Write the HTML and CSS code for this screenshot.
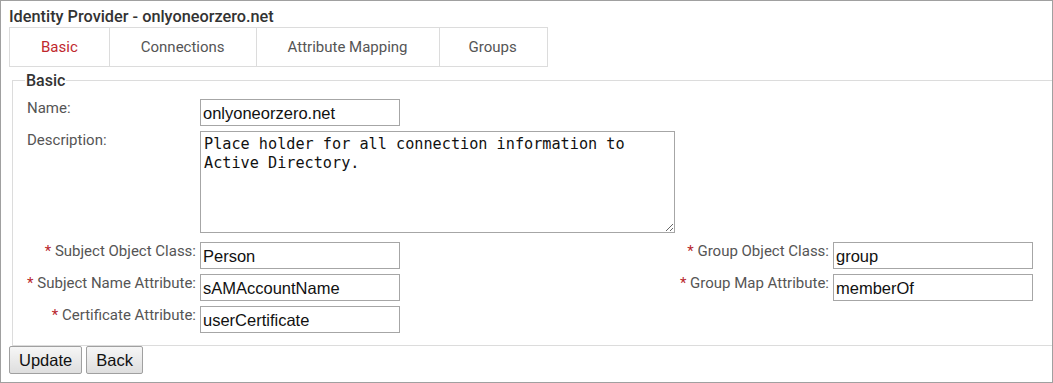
FILE: index.html
```html
<!DOCTYPE html>
<html lang="en">
<head>
    <meta charset="UTF-8">
    <title>Identity Provider - onlyoneorzero.net</title>
    <link rel="stylesheet" href="styles.css">
</head>
<body>
    <div class="panel">
        <!-- Page title -->
        <h1 class="title">Identity Provider - onlyoneorzero.net</h1>

        <!-- Tab strip -->
        <div class="tabs">
            <div class="tab active">Basic</div>
            <div class="tab">Connections</div>
            <div class="tab">Attribute Mapping</div>
            <div class="tab">Groups</div>
        </div>

        <!-- Basic settings -->
        <fieldset class="basic">
            <legend>Basic</legend>

            <div class="row">
                <label class="lbl">Name:</label>
                <input class="field" type="text" value="onlyoneorzero.net">
            </div>
            <div class="row">
                <label class="lbl">Description:</label>
                <textarea class="desc">Place holder for all connection information to Active Directory.</textarea>
            </div>

            <div class="pairs">
                <label class="lbl req"><span class="star">*</span> Subject Object Class:</label>
                <input class="field" type="text" value="Person">
                <span></span>
                <label class="lbl req"><span class="star">*</span> Group Object Class:</label>
                <input class="field" type="text" value="group">

                <label class="lbl req"><span class="star">*</span> Subject Name Attribute:</label>
                <input class="field" type="text" value="sAMAccountName">
                <span></span>
                <label class="lbl req"><span class="star">*</span> Group Map Attribute:</label>
                <input class="field" type="text" value="memberOf">

                <label class="lbl req"><span class="star">*</span> Certificate Attribute:</label>
                <input class="field" type="text" value="userCertificate">
            </div>
        </fieldset>

        <div class="actions">
            <button class="btn">Update</button>
            <button class="btn">Back</button>
        </div>
    </div>
</body>
</html>
```

FILE: styles.css
```css
body { margin: 0; font-family: Roboto, Arial, sans-serif; background: #fff; }

/* Outer frame */
.panel { width: 1053px; height: 383px; box-sizing: border-box; border: 1px solid #a0a0a0; overflow: hidden; }

.title { margin: 0; padding: 6px 0 0 8px; font-size: 16.3px; font-weight: 500; line-height: 19px; color: #333; }

/* Tabs */
.tabs { display: inline-flex; margin: 1px 0 0 8px; border: 1px solid #dcdcdc; }
.tab { padding: 0 31px; height: 38px; line-height: 38px; font-size: 15px; color: #555; border-left: 1px solid #dcdcdc; }
.tab:first-child { border-left: none; }
.tab:last-child { padding: 0 30px 0 29px; }
.tab.active { color: #c0272d; }

/* Fieldset */
.basic { margin: 4px 0 0 11px; padding: 9px 20px 12px 14px; width: 1006px; border: 1px solid #dcdcdc; min-width: 0; }
.basic legend { padding: 0 1px; margin-left: -2px; font-size: 16px; font-weight: 500; line-height: 19px; color: #333; }

.row { display: flex; align-items: flex-start; margin-bottom: 5px; }
.row .lbl { width: 173px; }

.lbl { font-size: 15px; color: #555; line-height: 17px; padding-top: 1px; }
.req { text-align: right; padding-right: 4px; white-space: nowrap; }
.star { color: #b8272d; }

.field { width: 200px; height: 27px; box-sizing: border-box; border: 1px solid #a6a6a6; padding: 1px 2px 0; font-family: Arial, "Liberation Sans", sans-serif; font-size: 16.5px; color: #111; margin: 0; }

.desc { width: 475px; height: 102px; box-sizing: border-box; border: 1px solid #a6a6a6; padding: 3px 3px; margin: 0; font-family: "DejaVu Sans Mono", monospace; font-size: 15.2px; line-height: 19px; color: #111; resize: both; }

.pairs { display: grid; grid-template-columns: 173px 200px 1fr auto 200px; row-gap: 5px; margin-top: 9px; align-items: start; }

/* Buttons */
.actions { display: flex; gap: 4px; padding: 0 0 0 8px; }
.btn { height: 28px; padding: 0 9px; font-family: Arial, "Liberation Sans", sans-serif; font-size: 16.5px; color: #111; background: linear-gradient(#f6f6f6, #dedede); border: 1px solid #a0a0a0; border-radius: 2px; }
```
